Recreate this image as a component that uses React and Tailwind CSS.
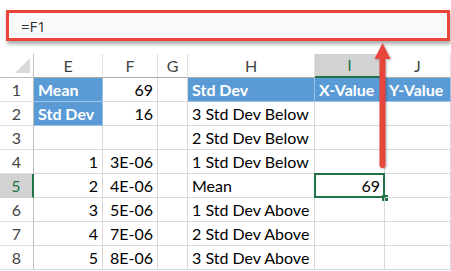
const cols = ['E', 'F', 'G', 'H', 'I', 'J']

const rows = [
  { n: 1, cells: [{ t: 'Mean', blue: true }, { t: '69', r: true }, { t: '' }, { t: 'Std Dev', blue: true }, { t: 'X-Value', blue: true }, { t: 'Y-Value', blue: true }] },
  { n: 2, cells: [{ t: 'Std Dev', blue: true }, { t: '16', r: true }, { t: '' }, { t: '3 Std Dev Below' }, { t: '' }, { t: '' }] },
  { n: 3, cells: [{ t: '' }, { t: '' }, { t: '' }, { t: '2 Std Dev Below' }, { t: '' }, { t: '' }] },
  { n: 4, cells: [{ t: '1', r: true }, { t: '3E-06', r: true }, { t: '' }, { t: '1 Std Dev Below' }, { t: '' }, { t: '' }] },
  { n: 5, cells: [{ t: '2', r: true }, { t: '4E-06', r: true }, { t: '' }, { t: 'Mean' }, { t: '69', r: true, sel: true }, { t: '' }] },
  { n: 6, cells: [{ t: '3', r: true }, { t: '5E-06', r: true }, { t: '' }, { t: '1 Std Dev Above' }, { t: '' }, { t: '' }] },
  { n: 7, cells: [{ t: '4', r: true }, { t: '7E-06', r: true }, { t: '' }, { t: '2 Std Dev Above' }, { t: '' }, { t: '' }] },
  { n: 8, cells: [{ t: '5', r: true }, { t: '8E-06', r: true }, { t: '' }, { t: '3 Std Dev Above' }, { t: '' }, { t: '' }] },
]

function Cell({ c }) {
  if (c.blue) {
    return (
      <div className="h-[24px] bg-[#5b9bd5] border-r border-b border-[#9cc2e5] flex items-center px-[4px] text-white font-bold whitespace-nowrap overflow-hidden">
        {c.t}
      </div>
    )
  }
  return (
    <div className={`relative h-[24px] border-r border-b border-[#d9d9d9] flex items-center px-[4px] text-black whitespace-nowrap ${c.r ? 'justify-end' : ''}`}>
      {c.t}
      {c.sel && (
        <>
          <div className="absolute -left-[1px] -top-[1px] right-[-1px] bottom-[-1px] border-2 border-[#217346]" />
          <div className="absolute right-[-4px] bottom-[-4px] w-[6px] h-[6px] bg-[#217346]" />
        </>
      )}
    </div>
  )
}

export default function App() {
  return (
    <div className="relative w-[451px] h-[271px] overflow-hidden bg-white font-['Lato',sans-serif] text-[16px]">
      {/* formula bar */}
      <div className="h-[54px] pt-[10px] pl-[6px]">
        <div className="w-[444px] h-[31px] border-[3px] border-[#e8453c] bg-[#f9f9f9] shadow-[1px_3px_4px_rgba(0,0,0,0.35)] flex items-center pl-[12px] pt-[2px] font-['Open_Sans',sans-serif] text-[15px] text-[#333]">
          =F1
        </div>
      </div>

      {/* sheet */}
      <div className="grid grid-cols-[34px_69px_55px_30px_127px_70px_1fr]">
        <div className="relative h-[24px] border-r border-b border-[#bdbdbd] bg-white">
          <div className="absolute right-[3px] bottom-[4px] w-0 h-0 border-l-[15px] border-l-transparent border-b-[15px] border-b-[#dadada]" />
        </div>
        {cols.map(l =>
          l === 'I' ? (
            <div key={l} className="h-[24px] bg-[#d2d2d2] border-r border-[#bdbdbd] border-b-2 border-b-[#217346] flex items-center justify-center text-[#217346]">
              {l}
            </div>
          ) : (
            <div key={l} className="h-[24px] bg-white border-r border-[#e1e1e1] border-b border-b-[#ababab] flex items-center justify-center text-[#444]">
              {l}
            </div>
          )
        )}

        {rows.map(row => (
          <div key={row.n} className="contents">
            {row.n === 5 ? (
              <div className="h-[24px] bg-[#d2d2d2] border-r-2 border-[#217346] border-b border-b-[#d0d0d0] flex items-center justify-center text-[#217346]">
                {row.n}
              </div>
            ) : (
              <div className="h-[24px] bg-white border-r border-[#bdbdbd] border-b border-b-[#e1e1e1] flex items-center justify-center text-[#444]">
                {row.n}
              </div>
            )}
            {row.cells.map((c, i) => (
              <Cell key={i} c={c} />
            ))}
          </div>
        ))}
      </div>

      {/* red arrow */}
      <svg className="absolute left-[374px] top-[42px] drop-shadow-[1px_1px_1px_rgba(0,0,0,0.3)]" width="18" height="128" viewBox="0 0 18 128">
        <path d="M8.5 1 L16.5 17 L0.5 17 Z" fill="#e8453c" />
        <rect x="5.5" y="16" width="6" height="110" rx="3" fill="#e8453c" />
      </svg>
    </div>
  )
}
